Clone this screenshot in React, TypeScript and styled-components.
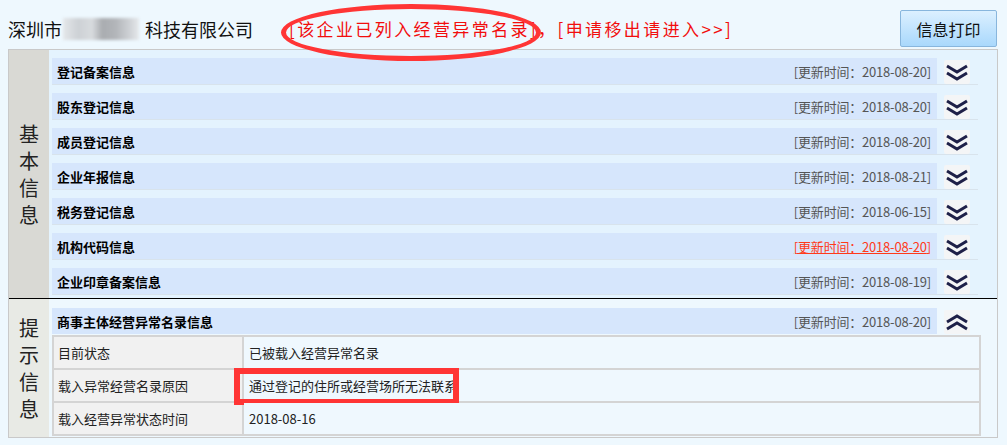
import styled, { createGlobalStyle } from 'styled-components';

/* ── Global ── */
const Global = createGlobalStyle`
  html, body {
    margin: 0;
    padding: 0;
    background: #eef8fe;
    font-family: "Noto Sans CJK SC", "Liberation Sans", sans-serif;
  }
`;

/* ── Title bar ── */
const TopBar = styled.header`
  height: 49px;
  box-sizing: border-box;
  padding: 10px 10px 0 8px;
  display: flex;
  align-items: flex-start;
`;

const CompanyName = styled.h1`
  margin: 0;
  font-size: 18px;
  font-weight: 400;
  line-height: 38px;
  color: #111;
  display: flex;
  align-items: center;
  white-space: nowrap;
`;

const Blur = styled.span`
  display: inline-block;
  width: 76px;
  height: 22px;
  margin: 0 6px 0 1px;
  background: linear-gradient(90deg, #e4e7ea 0%, #cdd1d5 20%, #d8dbde 38%, #a9acb0 52%, #b3b6ba 70%, #cfd2d6 88%, #e6e9ec 100%);
  filter: blur(1.5px);
`;

const Notice = styled.div`
  margin-left: 36px;
  font-size: 17px;
  letter-spacing: 2.4px;
  line-height: 38px;
  color: #f20d0d;
  white-space: nowrap;
  display: flex;
`;

const Circled = styled.span`
  position: relative;
`;

/* hand-drawn annotation ellipse */
const Ellipse = styled.span`
  position: absolute;
  left: -8px;
  right: -3px;
  top: -6px;
  bottom: -13px;
  border: 5px solid #ff3535;
  border-radius: 50%;
  pointer-events: none;
`;

const PrintBtn = styled.button`
  margin-left: auto;
  width: 97px;
  height: 37px;
  border: 1px solid #88b6dd;
  border-radius: 2px;
  background: linear-gradient(#dcf0ff, #a9d8fc);
  font-family: "Noto Sans CJK SC", sans-serif;
  font-size: 16px;
  color: #111;
  cursor: pointer;
`;

/* ── Panel ── */
const Panel = styled.div`
  margin: 0 9px 0 8px;
  border: 1px solid #c9c9c9;
`;

const Section = styled.section<{ $divider?: boolean }>`
  display: grid;
  grid-template-columns: 40px 1fr;
  border-top: ${p => (p.$divider ? '1px solid #000' : 'none')};
`;

const Side = styled.div<{ $tone: string }>`
  background: ${p => p.$tone};
  display: flex;
  align-items: center;
  justify-content: center;
`;

const SideText = styled.div`
  width: 20px;
  font-size: 20px;
  line-height: 27px;
  color: #222;
  text-align: center;
`;

const Body = styled.div<{ $bg: string; $pad: string }>`
  background: ${p => p.$bg};
  padding: ${p => p.$pad};
`;

const Row = styled.div<{ $line?: boolean }>`
  display: flex;
  align-items: flex-start;
  gap: 7px;
  padding-right: 8px;
  border-bottom: ${p => (p.$line ? '1px solid #d8e3ec' : 'none')};
  margin-bottom: ${p => (p.$line ? '8px' : '1px')};
  &:last-child { margin-bottom: 0; }
`;

const Bar = styled.div`
  flex: 1;
  height: 26px;
  background: #d6e6fc;
  display: flex;
  align-items: center;
  justify-content: space-between;
  padding: 0 6px 0 5px;
`;

const Label = styled.span`
  font-size: 13px;
  font-weight: 700;
  color: #000;
`;

const Stamp = styled.span<{ $alert?: boolean }>`
  font-size: 13px;
  letter-spacing: -0.2px;
  color: ${p => (p.$alert ? '#ff3a1a' : '#555')};
  text-decoration: ${p => (p.$alert ? 'underline' : 'none')};
`;

const Toggle = styled.button`
  width: 26px;
  height: 24px;
  margin-top: 2px;
  padding: 0;
  border: none;
  border-radius: 2px;
  background: #f4f5f6;
  display: flex;
  align-items: center;
  justify-content: center;
  cursor: pointer;
`;

/* ── Detail table ── */
const Table = styled.table`
  width: calc(100% + 3px);
  table-layout: fixed;
  border-collapse: collapse;
  font-size: 13px;
  color: #222;
`;

const Th = styled.td`
  height: 31px;
  padding: 0 0 0 4px;
  background: #f1f1f1;
  border: 2px solid #d4d4d4;
`;

const Td = styled.td`
  position: relative;
  padding: 0 0 0 5px;
  background: #eff8fe;
  border: 2px solid #d4d4d4;
`;

const Boxed = styled.span`
  position: absolute;
  left: -10px;
  top: -2px;
  width: 225px;
  height: 37px;
  box-sizing: border-box;
  border: 6px solid #ff3535;
  pointer-events: none;
`;

function Chevrons({ up }: { up?: boolean }) {
  const d = up
    ? 'M1 9 L11 3 L21 9 M1 16 L11 10 L21 16'
    : 'M1 3 L11 9 L21 3 M1 10 L11 16 L21 10';
  return (
    <svg width="22" height="19" viewBox="0 0 22 19">
      <path d={d} fill="none" stroke="#1e2048" strokeWidth="3" strokeLinejoin="miter" />
    </svg>
  );
}

const records = [
  { label: '登记备案信息', date: '2018-08-20' },
  { label: '股东登记信息', date: '2018-08-20' },
  { label: '成员登记信息', date: '2018-08-20' },
  { label: '企业年报信息', date: '2018-08-21' },
  { label: '税务登记信息', date: '2018-06-15' },
  { label: '机构代码信息', date: '2018-08-20', alert: true },
  { label: '企业印章备案信息', date: '2018-08-19' },
];

export default function App() {
  return (
    <>
      <Global />
      <TopBar>
        <CompanyName>
          深圳市<Blur />科技有限公司
        </CompanyName>
        <Notice>
          <Circled>
            [该企业已列入经营异常名录]
            <Ellipse />
          </Circled>
          ，[申请移出请进入&gt;&gt;]
        </Notice>
        <PrintBtn>信息打印</PrintBtn>
      </TopBar>

      <Panel>
        {/* ── 基本信息 ── */}
        <Section>
          <Side $tone="#d9d9d4">
            <SideText>基本信息</SideText>
          </Side>
          <Body $bg="#e4f3fe" $pad="8px 19px 3px 3px">
            {records.map(r => (
              <Row key={r.label} $line>
                <Bar>
                  <Label>{r.label}</Label>
                  <Stamp $alert={r.alert}>[更新时间：{r.date}]</Stamp>
                </Bar>
                <Toggle>
                  <Chevrons />
                </Toggle>
              </Row>
            ))}
          </Body>
        </Section>

        {/* ── 提示信息 ── */}
        <Section $divider>
          <Side $tone="#e8eae5">
            <SideText>提示信息</SideText>
          </Side>
          <Body $bg="#eef8fe" $pad="9px 19px 1px 3px">
            <Row>
              <Bar>
                <Label>商事主体经营异常名录信息</Label>
                <Stamp>[更新时间：2018-08-20]</Stamp>
              </Bar>
              <Toggle>
                <Chevrons up />
              </Toggle>
            </Row>
            <Table>
              <colgroup>
                <col style={{ width: 190 }} />
                <col />
              </colgroup>
              <tbody>
                <tr>
                  <Th>目前状态</Th>
                  <Td>已被载入经营异常名录</Td>
                </tr>
                <tr>
                  <Th>载入异常经营名录原因</Th>
                  <Td>
                    通过登记的住所或经营场所无法联系
                    <Boxed />
                  </Td>
                </tr>
                <tr>
                  <Th>载入经营异常状态时间</Th>
                  <Td>2018-08-16</Td>
                </tr>
              </tbody>
            </Table>
          </Body>
        </Section>
      </Panel>
    </>
  );
}
